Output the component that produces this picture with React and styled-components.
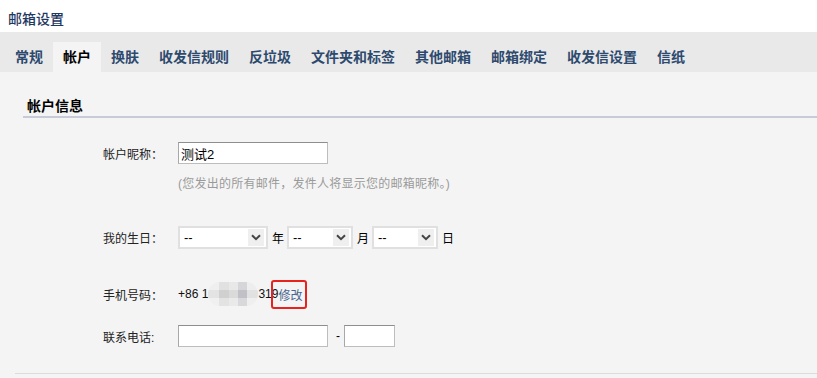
import React from 'react';
import styled, { createGlobalStyle } from 'styled-components';

const GlobalStyle = createGlobalStyle`
  html, body {
    margin: 0;
    padding: 0;
    background: #f4f4f4;
    font-family: "Liberation Sans", "Noto Sans CJK SC", Arial, sans-serif;
  }
`;

const tabs = ['常规', '帐户', '换肤', '收发信规则', '反垃圾', '文件夹和标签', '其他邮箱', '邮箱绑定', '收发信设置', '信纸'];

const ChevronDown = () => (
  <svg width="10" height="7" viewBox="0 0 10 7">
    <path d="M1 1.2 L5 5.2 L9 1.2" fill="none" stroke="#444" strokeWidth="2" />
  </svg>
);

export default function App() {
  return (
    <Page>
      <GlobalStyle />
      <Header>邮箱设置</Header>
      <TabBar>
        {tabs.map((t) => (
          <Tab key={t} active={t === '帐户'}>{t}</Tab>
        ))}
      </TabBar>
      <Content>
        <SectionTitle>帐户信息</SectionTitle>
        <Form>
          <Row top={24}>
            <Label>帐户昵称：</Label>
            <TextInput width={150} defaultValue="测试2" />
          </Row>
          <Hint>(您发出的所有邮件，发件人将显示您的邮箱昵称。)</Hint>
          <Row top={33}>
            <Label>我的生日：</Label>
            <Select width={90}>
              <span>--</span>
              <Arrow><ChevronDown /></Arrow>
            </Select>
            <Unit>年</Unit>
            <Select width={66}>
              <span>--</span>
              <Arrow><ChevronDown /></Arrow>
            </Select>
            <Unit>月</Unit>
            <Select width={66}>
              <span>--</span>
              <Arrow><ChevronDown /></Arrow>
            </Select>
            <Unit>日</Unit>
          </Row>
          <Row top={33} height={26}>
            <Label>手机号码：</Label>
            <Phone>
              +86 1<Blur />319
              <EditLink href="#">修改</EditLink>
            </Phone>
          </Row>
          <Row top={18}>
            <Label>联系电话:</Label>
            <TextInput width={150} />
            <Dash>-</Dash>
            <TextInput width={51} />
          </Row>
        </Form>
        <BottomRule />
      </Content>
    </Page>
  );
}

const Page = styled.div`
  width: 817px;
  min-height: 378px;
  background: #f4f4f4;
`;

const Header = styled.div`
  height: 32px;
  box-sizing: border-box;
  padding: 3px 0 0 8px;
  display: flex;
  align-items: center;
  background: #fff;
  color: #1f3862;
  font-size: 14px;
  font-weight: 500;
`;

const TabBar = styled.div`
  height: 40px;
  box-sizing: border-box;
  padding-left: 5px;
  display: flex;
  align-items: flex-end;
  background: #e9e9e9;
`;

const Tab = styled.div`
  height: 30px;
  padding: 0 10px;
  line-height: 30px;
  font-size: 14px;
  font-weight: bold;
  color: ${({ active }) => (active ? '#000' : '#2d4a6e')};
  background: ${({ active }) => (active ? '#f4f4f4' : 'transparent')};
  cursor: pointer;
`;

const Content = styled.div`
  padding-top: 25px;
  background: #f4f4f4;
`;

const SectionTitle = styled.div`
  margin-left: 23px;
  padding-left: 4px;
  line-height: 19px;
  font-size: 14px;
  font-weight: bold;
  color: #000;
  border-bottom: 2px solid #c8cad7;
`;

const Form = styled.div`
  padding-left: 103px;
`;

const Row = styled.div`
  margin-top: ${({ top }) => top}px;
  height: ${({ height }) => height || 22}px;
  display: flex;
  align-items: center;
  font-size: 12px;
  color: #222;
`;

const Label = styled.div`
  width: 75px;
  flex-shrink: 0;
  font-size: 12px;
  color: #222;
`;

const TextInput = styled.input`
  width: ${({ width }) => width}px;
  height: 22px;
  box-sizing: border-box;
  margin: 0;
  padding: 0 2px;
  border: 1px solid #bdbdbd;
  border-top-color: #8e8e8e;
  border-left-color: #a8a8a8;
  background: #fff;
  font-family: "Liberation Sans", "Noto Sans CJK SC", Arial, sans-serif;
  font-size: 13px;
  color: #000;
  outline: none;
`;

const Hint = styled.div`
  margin: 11px 0 0 75px;
  line-height: 18px;
  font-size: 12px;
  letter-spacing: 0.25px;
  color: #9a9a9a;
`;

const Select = styled.div`
  width: ${({ width }) => width}px;
  height: 23px;
  box-sizing: border-box;
  padding: 0 2px 0 4px;
  display: flex;
  align-items: center;
  justify-content: space-between;
  border: 2px solid #e0e0e0;
  background: #fff;
  font-size: 13px;
  color: #000;
`;

const Arrow = styled.div`
  width: 16px;
  height: 17px;
  display: flex;
  align-items: center;
  justify-content: center;
  background: #efefef;
`;

const Unit = styled.span`
  margin: 0 3px 0 4px;
  font-size: 12px;
  color: #000;
`;

const Phone = styled.div`
  display: flex;
  align-items: center;
  font-size: 12px;
  color: #111;
  white-space: pre;
`;

const Blur = styled.span`
  display: inline-block;
  width: 50px;
  height: 24px;
  border-radius: 12px;
  background:
    linear-gradient(180deg, rgba(255, 255, 255, 0.3) 0 33%, rgba(0, 0, 0, 0.02) 33% 66%, rgba(255, 255, 255, 0.35) 66%),
    linear-gradient(90deg, #e8e8e8 0 22%, #d4d4d4 22% 42%, #dedede 42% 60%, #c4c4ca 60% 78%, #e6e6e6 78%);
`;

const EditLink = styled.a`
  position: relative;
  font-size: 12px;
  color: #4a6690;
  text-decoration: none;

  &::after {
    content: '';
    position: absolute;
    left: -7px;
    right: -5px;
    top: -6px;
    bottom: -6px;
    border: 2px solid #e8221f;
    border-radius: 3px;
  }
`;

const Dash = styled.span`
  margin: 0 4px 0 8px;
  font-size: 12px;
  color: #000;
`;

const BottomRule = styled.div`
  margin: 26px 0 0 15px;
  height: 1px;
  background: #dcdcdc;
`;
